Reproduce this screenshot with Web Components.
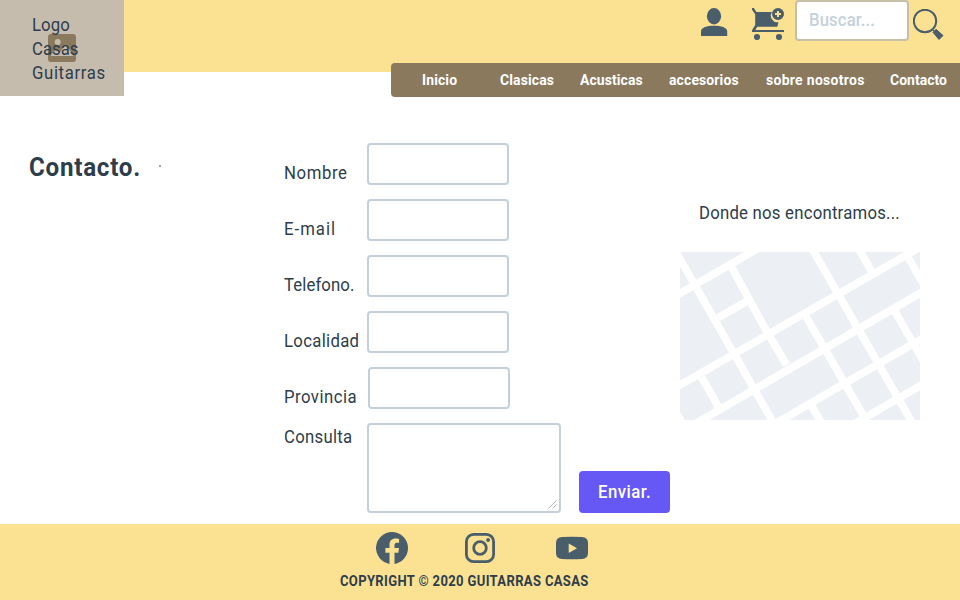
<!DOCTYPE html>
<html lang="es"><head><meta charset="utf-8"><title>Guitarras Casas</title>
<style>
body{margin:0;background:#fff;color:#2d3d4b;font:18px/24px Roboto,"Liberation Sans",sans-serif;overflow:hidden}
</style></head><body>
<shop-page></shop-page>
<script>
const define=(name,html,setup)=>customElements.define(name,class extends HTMLElement{
  connectedCallback(){
    if(this.shadowRoot)return;
    const t=document.createElement('template');t.innerHTML=html;
    this.attachShadow({mode:'open'}).append(t.content.cloneNode(true));
    if(setup)setup(this,this.shadowRoot);
  }
});

/* A line of slightly condensed text, tracked so that it fills the width given in its "w" attribute. */
define('fit-text',`<style>:host{display:block;white-space:nowrap}span{display:inline-block;transform-origin:0 0;transform:scaleX(.93)}</style><span><slot></slot></span>`,(el,root)=>{
  const s=root.querySelector('span'),w=+el.getAttribute('w');
  el.style.width=w+'px';
  s.style.letterSpacing=(w/.93-s.offsetWidth)/(el.textContent.length-1)+'px';
});

const icons={
user:['0 0 28 30','<ellipse cx="14" cy="8.200" rx="7.100" ry="8.200"/><path d="M1 28v-4.500C1 19.500 7 17.800 14 17.800s13.200 1.700 13.200 5.700V28z"/>'],
cart:['0 0 32 32','<path d="M0 0h1.800l2.600 4.100h15.600A6.500 6.500 0 0 0 26.500 14.200l-1.200 4.600H5.300l-2 3.200H32v2H0v-1.800L3.200 17V6.200L0 1.800z"/><circle cx="5" cy="29" r="3.100"/><circle cx="27" cy="29" r="3.100"/><path fill-rule="evenodd" d="M26 0a6 6 0 1 1 0 12a6 6 0 1 1 0-12zM25 3v2h-2v2h2v2h2V7h2V5h-2V3z"/>'],
search:['0 0 32 32','<circle cx="12" cy="12" r="11.200" fill="none" stroke="currentColor" stroke-width="2"/><path d="M19 20l2.200 2.200M20 23.300l3-3L30 26.500l-4 4z" stroke="currentColor" stroke-width="1"/>'],
facebook:['0 0 32 32','<path d="M32 16.100A16 16 0 1 0 13.500 31.900V20.700H9.400v-4.600h4.100v-3.500c0-4 2.400-6.200 6-6.200 1.800 0 3.600.3 3.600.3v4h-2c-2 0-2.600 1.200-2.600 2.500v2.900H23l-.7 4.600h-3.800v11.200A16 16 0 0 0 32 16.100z"/>'],
instagram:['0 0 32 32','<rect x="2.400" y="2.400" width="27.200" height="27.200" rx="7.200" fill="none" stroke="currentColor" stroke-width="2.800"/><circle cx="16" cy="16" r="6.300" fill="none" stroke="currentColor" stroke-width="2.800"/><circle cx="24.100" cy="8" r="1.900"/>'],
youtube:['0 0 32 32','<path fill-rule="evenodd" d="M6 5Q16 4.300 26 5q6 .3 6 6v10q0 5.700-6 6-10 .7-20 0-6-.3-6-6V11q0-5.700 6-6zM12.700 11.500v9.400l8.300-4.700z"/>'],
image:['0 0 28 28','<path fill-rule="evenodd" d="M3 0h22q3 0 3 3v22q0 3-3 3H3q-3 0-3-3V3q0-3 3-3zM9.700 4.900a3 3 0 1 0 0 6a3 3 0 0 0 0-6zM3 22h22v-1.500l-7.300-10-6.200 8-3.500-3L3 20.500z"/>']};
define('ui-icon',`<style>:host{display:block;color:#4a5d6b}svg{display:block}</style>`,(el,root)=>{
  const [box,art]=icons[el.getAttribute('name')],[,,w,h]=box.split(' ');
  root.innerHTML+=`<svg viewBox="${box}" width="${w}" height="${h}" fill="currentColor">${art}</svg>`;
});

define('site-logo',`<style>
:host{position:absolute;left:0;top:0;box-sizing:border-box;width:124px;height:96px;background:#c5bcae;padding:13px 0 0 32px}
ui-icon{position:absolute;left:48px;top:34px;color:#8a795d}
fit-text{position:relative}
</style><ui-icon name="image"></ui-icon><fit-text w="37.500">Logo</fit-text><fit-text w="46.500">Casas</fit-text><fit-text w="73">Guitarras</fit-text>`);

define('site-header',`<style>
:host{display:flex;box-sizing:border-box;height:72px;background:#fbe192;justify-content:flex-end;padding-right:15px}
.user{margin:8px 24px 0 0}.cart{margin:8px 11px 0 0}.search{margin:9px 0 0 4px}
.box{box-sizing:border-box;width:114px;height:41px;border:2px solid #c7bfa7;border-radius:4px;background:#fff;color:#c5d1dc;padding:6px 0 0 12px;font-weight:500}
</style><site-logo></site-logo><ui-icon class="user" name="user"></ui-icon><ui-icon class="cart" name="cart"></ui-icon><div class="box"><fit-text w="66">Buscar...</fit-text></div><ui-icon class="search" name="search"></ui-icon>`);

define('site-nav',`<style>
:host{display:grid;grid-template-columns:78px 80px 89px 97px 124px 57px;position:relative;box-sizing:border-box;margin:-9px 0 0 391px;height:34px;padding:5px 0 0 31px;background:#8a795d;border-radius:4px 0 0 4px;color:#fff;font-size:15px;font-weight:700}
</style><fit-text w="35">Inicio</fit-text><fit-text w="54">Clasicas</fit-text><fit-text w="63">Acusticas</fit-text><fit-text w="70">accesorios</fit-text><fit-text w="98">sobre nosotros</fit-text><fit-text w="57">Contacto</fit-text>`);

define('form-field',`<style>
:host{display:grid;grid-template-columns:83px auto;justify-content:start;align-items:end;height:42px}
div{box-sizing:border-box;width:142px;height:42px;border:2px solid #c3cfd9;border-radius:4px}
:host([shifted]) div{margin-left:1px}
:host([area]){height:90px;align-items:start}
:host([area]) div{width:194px;height:90px;display:flex;justify-content:flex-end;align-items:flex-end}
svg{display:none;margin:0 2px 2px 0}:host([area]) svg{display:block}
:host([area]) section{padding-top:2px}
</style><section><slot></slot></section><div><svg width="9" height="9" viewBox="0 0 9 9" stroke="#b8b8b8"><path d="M.5 8.500l8-8M4.500 8.500l4-4"/></svg></div>`);

define('street-map',`<style>:host{display:block}svg{display:block}</style>
<svg width="240" height="168" viewBox="30 186 720 504"><rect x="30" y="186" width="720" height="504" fill="#eceff4"/>
<g stroke="#fff" stroke-width="23" fill="none">
<path d="M13 320L263 176M13 595L742 176M78 700L767 300M317 700L767 440M556 700L767 578M145 383L230 334"/>
<path d="M18 186L311 700M185 232L295 433 350 525M426 176L728 700M566 176L607 248M715 203L760 281M408 380L588 690M675 365L763 517M95 562L145 650M425 648L455 700M15 663L38 702"/>
</g></svg>`);

define('contact-main',`<style>
:host{display:grid;grid-template-columns:284px 295px 101px 240px;box-sizing:border-box;padding-top:46px;height:427px}
h1{margin:8px 0 0 29px;font-size:26px;line-height:32px;font-weight:700;display:flex}
h1 i{width:2px;height:2px;background:#97a4b0;margin:14px 0 0 19px}
form{display:grid;grid-auto-rows:max-content;gap:14px;margin:0}
.send{align-self:start;margin-top:328px;box-sizing:border-box;width:91px;height:42px;background:#6558f5;border-radius:4px;color:#fff;font-weight:500;padding:9px 0 0 19px}
.place{padding-top:58px}.place fit-text{margin:0 0 27px 19px}
</style>
<h1><fit-text w="111">Contacto.</fit-text><i></i></h1>
<form><form-field><fit-text w="62.500">Nombre</fit-text></form-field><form-field><fit-text w="51.500">E-mail</fit-text></form-field><form-field><fit-text w="70.500">Telefono.</fit-text></form-field><form-field><fit-text w="75">Localidad</fit-text></form-field><form-field shifted><fit-text w="72.500">Provincia</fit-text></form-field><form-field area><fit-text w="68">Consulta</fit-text></form-field></form>
<div class="send"><fit-text w="53">Enviar.</fit-text></div>
<div class="place"><fit-text w="200.500">Donde nos encontramos...</fit-text><street-map></street-map></div>`);

define('site-footer',`<style>
:host{display:block;box-sizing:border-box;height:76px;background:#fbe192;padding:8px 0 0 340px;font-size:14px;font-weight:700}
div{display:grid;grid-template-columns:88px 92px 32px;padding-left:36px;margin-bottom:5px}
</style><div><ui-icon name="facebook"></ui-icon><ui-icon name="instagram"></ui-icon><ui-icon name="youtube"></ui-icon></div><fit-text w="248">COPYRIGHT © 2020 GUITARRAS CASAS</fit-text>`);

define('shop-page',`<style>:host{display:grid;position:relative;width:960px;height:600px;grid-template-rows:72px 25px 427px 76px}</style>
<site-header></site-header><site-nav></site-nav><contact-main></contact-main><site-footer></site-footer>`);
</script></body></html>
